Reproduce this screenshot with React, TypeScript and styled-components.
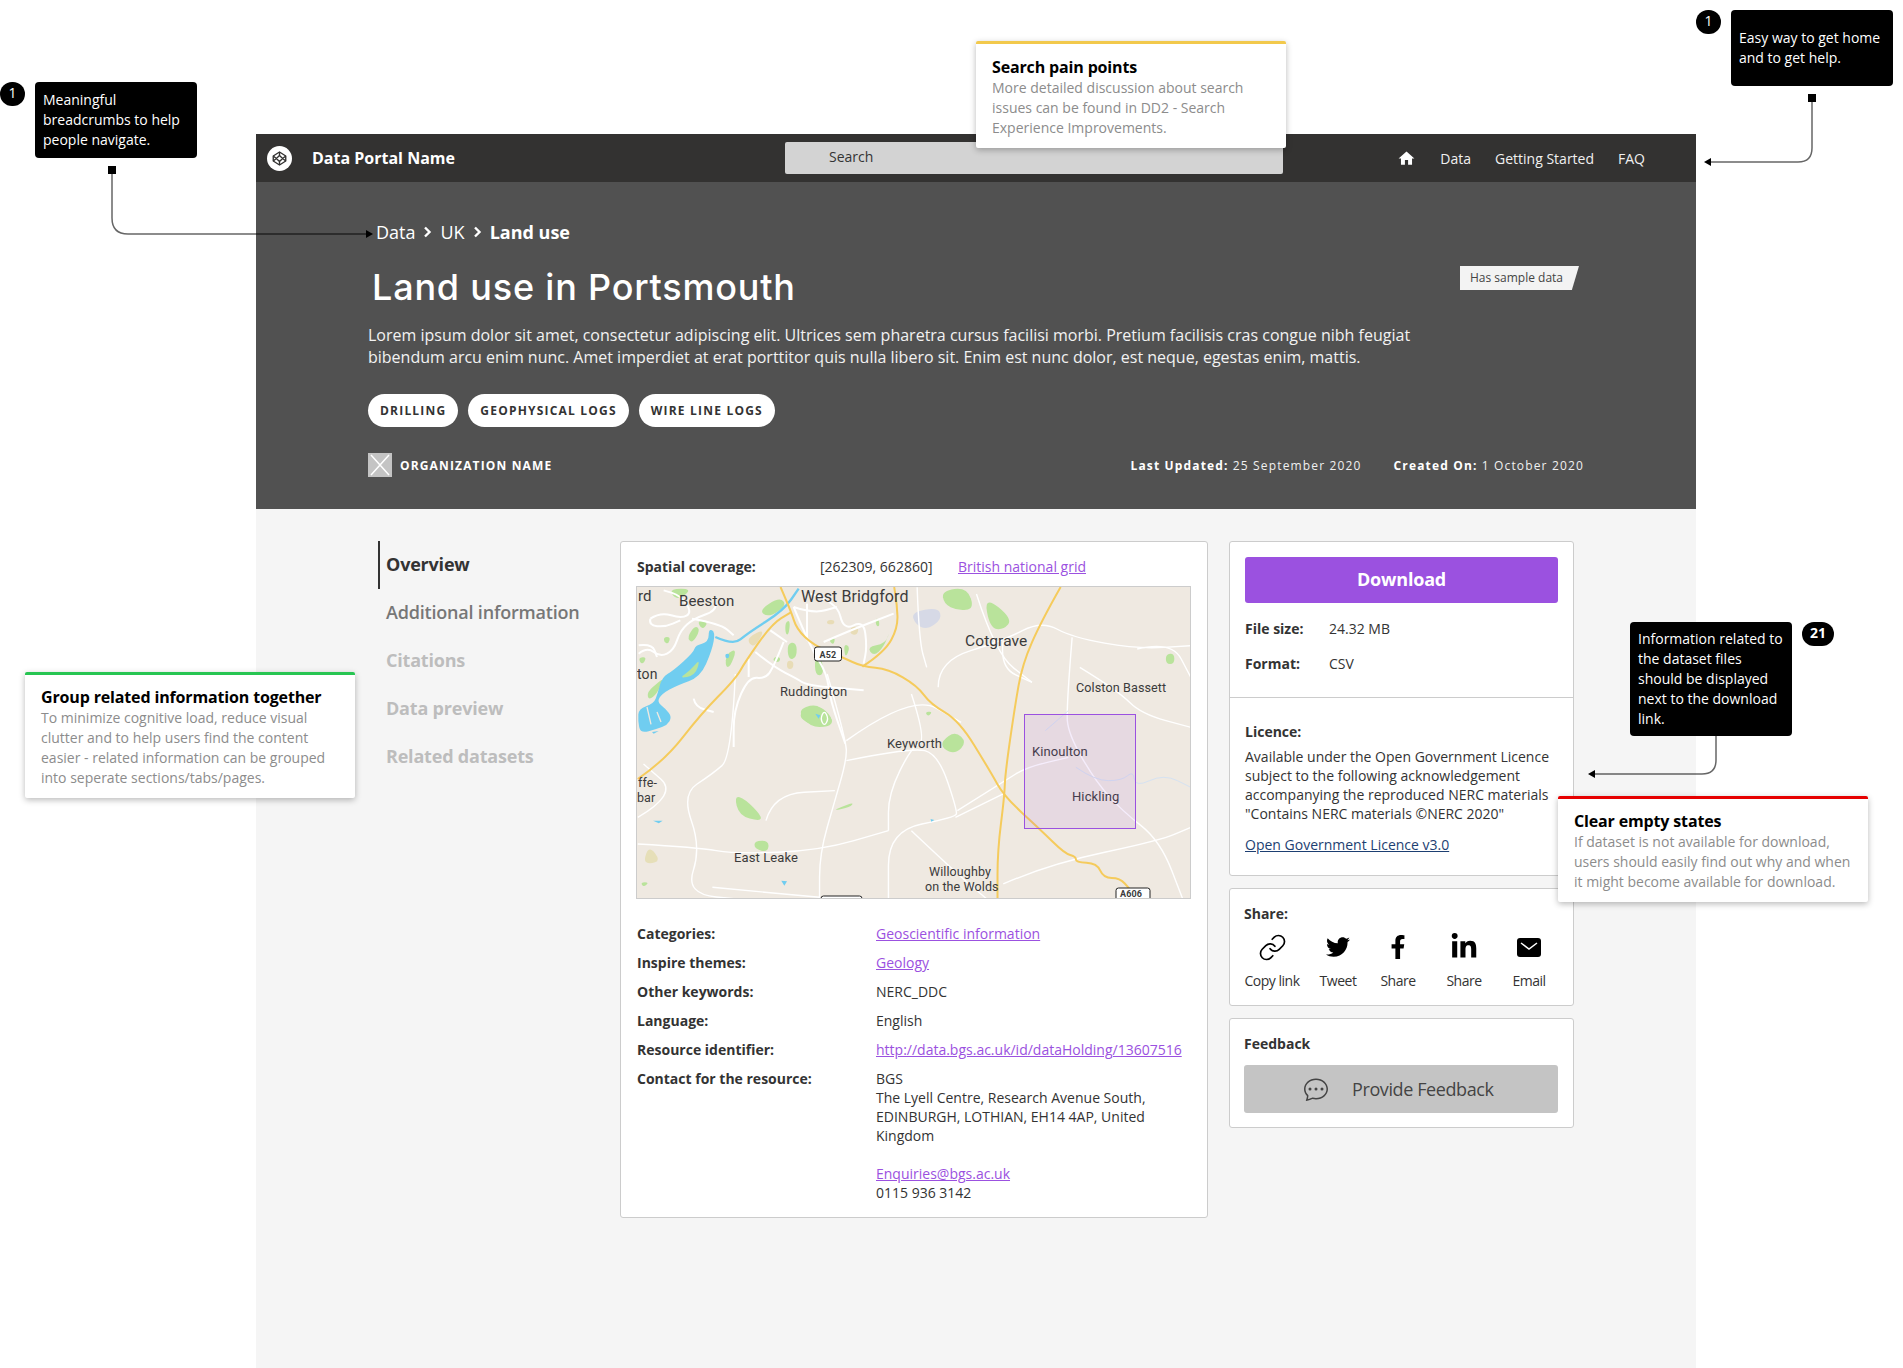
// App.tsx
import React from "react";
import styled, { createGlobalStyle } from "styled-components";
import { FaFacebookF, FaLinkedinIn, FaTwitter } from "react-icons/fa";
import { MdHome } from "react-icons/md";
import { BsChatDots } from "react-icons/bs";
import { Link as LinkIcon } from "lucide-react";

const GlobalStyle = createGlobalStyle`
  html, body {
    margin: 0;
    padding: 0;
    background: #fff;
    font-family: "Open Sans", "Liberation Sans", sans-serif;
  }
  * { box-sizing: border-box; }
`;

const Canvas = styled.div`
  position: relative;
  width: 1903px;
  height: 1368px;
  padding: 134px 0 0 256px;
  overflow: hidden;
`;

const Frame = styled.main`
  width: 1440px;
  height: 1234px;
  background: #f5f5f5;
`;

const TopBar = styled.header`
  display: flex;
  align-items: center;
  height: 48px;
  padding: 0 51px 0 11px;
  background: #333231;
  color: #fff;
`;

const Brand = styled.div`
  display: flex;
  align-items: center;
  gap: 20px;
  width: 518px;
  font-size: 16px;
  font-weight: 700;
`;

const SearchBox = styled.div`
  width: 498px;
  height: 32px;
  padding-left: 44px;
  background: #d3d3d3;
  border-radius: 2px;
  color: #333;
  font-size: 14px;
  line-height: 30px;
`;

const TopNav = styled.nav`
  display: flex;
  align-items: center;
  gap: 23px;
  margin-left: auto;
  padding-top: 1px;
  font-size: 14px;
  color: #f0f0f0;

  span {
    margin-left: 1px;
  }
`;

const Hero = styled.section`
  height: 327px;
  padding: 38px 112px 0;
  background: #515151;
  color: #fff;
`;

const Crumbs = styled.div`
  display: flex;
  align-items: center;
  gap: 8px;
  height: 24px;
  padding-left: 8px;
  font-size: 18px;
`;

const CrumbCurrent = styled.b`
  font-weight: 700;
`;

const TitleRow = styled.div`
  display: flex;
  justify-content: space-between;
  align-items: flex-start;
  margin-top: 21px;
  padding: 0 5px 0 4px;
`;

const Title = styled.h1`
  margin: 0;
  font-family: Inter, "Open Sans", sans-serif;
  font-size: 36px;
  font-weight: 500;
  line-height: 44px;
  letter-spacing: 0.8px;
`;

const SampleTag = styled.div`
  width: 119px;
  height: 24px;
  margin-top: 1px;
  padding-left: 10px;
  background: #f3f3f3;
  color: #444;
  font-size: 12px;
  line-height: 23px;
  clip-path: polygon(0 0, 100% 0, 94% 100%, 0 100%);
`;

const Lede = styled.p`
  margin: 15px 0 0;
  font-size: 16px;
  line-height: 22px;
  color: #f2f2f2;
`;

const Tags = styled.div`
  display: flex;
  gap: 10px;
  margin-top: 26px;
`;

const Tag = styled.span`
  height: 33px;
  padding: 0 12px;
  border-radius: 17px;
  background: #fff;
  color: #333;
  font-size: 12px;
  font-weight: 700;
  line-height: 33px;
  letter-spacing: 1.2px;
`;

const HeroFoot = styled.div`
  display: flex;
  justify-content: space-between;
  align-items: center;
  height: 24px;
  margin-top: 26px;
`;

const Org = styled.div`
  display: flex;
  align-items: center;
  gap: 8px;
  font-size: 12px;
  font-weight: 700;
  letter-spacing: 1.15px;
`;

const OrgMark = styled.svg`
  display: block;
  width: 24px;
  height: 24px;
  background: #c4c4c4;
`;

const Dates = styled.div`
  display: flex;
  gap: 32px;
  font-size: 12px;
  letter-spacing: 1.15px;
  color: #f0f0f0;

  b {
    font-weight: 700;
    color: #fff;
  }
`;

const Body = styled.div`
  display: flex;
  align-items: flex-start;
  padding: 32px 0 0 122px;
`;

const SideNav = styled.nav`
  flex: none;
  width: 242px;
`;

const SideItem = styled.div<{ $active?: boolean; $tone: string; $weight: number }>`
  height: 48px;
  padding-left: ${(p) => (p.$active ? "6px" : "8px")};
  border-left: ${(p) => (p.$active ? "2px solid #333" : "none")};
  color: ${(p) => p.$tone};
  font-size: 18px;
  font-weight: ${(p) => p.$weight};
  line-height: 47px;
  letter-spacing: -0.2px;
`;

const Card = styled.div`
  background: #fff;
  border: 1px solid #ccc;
  border-radius: 3px;
`;

const MainCard = styled(Card)`
  flex: none;
  width: 588px;
  height: 677px;
  padding: 15px 15px 14px;
  font-size: 14px;
  line-height: 19px;
  color: #333;
`;

const Coverage = styled.div`
  display: flex;
  height: 20px;
  margin-left: 1px;
  line-height: 20px;
`;

const CoverageLabel = styled.b`
  width: 183px;
  font-weight: 700;
`;

const CoverageValue = styled.span`
  width: 138px;
`;

const A = styled.a`
  color: #9b51e0;
  text-decoration: underline;
`;

const MapFrame = styled.div`
  position: relative;
  width: 555px;
  height: 313px;
  margin-top: 9px;
  border: 1px solid #ccc;
  overflow: hidden;
`;

const MapSvg = styled.svg`
  display: block;
  background: #efe9e1;
`;

const MapLabel = styled.text<{ $size?: number }>`
  font-family: Roboto, sans-serif;
  font-size: ${(p) => p.$size ?? 13}px;
  letter-spacing: 0.1px;
  fill: #3b3b3b;
`;

const MetaGrid = styled.dl`
  display: grid;
  grid-template-columns: 239px 1fr;
  row-gap: 10px;
  margin: 25px 0 0 1px;
`;

const MetaLabel = styled.dt`
  font-weight: 700;
`;

const MetaValue = styled.dd`
  margin: 0;
`;

const SideColumn = styled.aside`
  flex: none;
  width: 345px;
  margin-left: 21px;
  display: flex;
  flex-direction: column;
`;

const DownloadSection = styled.div`
  padding: 15px 15px 23px;
  border-bottom: 1px solid #ccc;
`;

const DownloadButton = styled.div`
  height: 46px;
  margin-bottom: 16px;
  border-radius: 3px;
  background: #9b51e0;
  color: #fff;
  font-size: 18px;
  font-weight: 700;
  line-height: 45px;
  letter-spacing: -0.2px;
  text-align: center;
`;

const FileRow = styled.div`
  display: flex;
  height: 20px;
  color: #333;
  font-size: 14px;
  line-height: 20px;

  & + & {
    margin-top: 15px;
  }

  b {
    width: 84px;
    font-weight: 700;
  }
`;

const LicenceSection = styled.div`
  padding: 24px 15px 21px;
  color: #333;
  font-size: 14px;
  line-height: 19px;
`;

const LicenceHead = styled.b`
  display: block;
  margin-bottom: 6px;
  font-weight: 700;
`;

const LicenceLink = styled.a`
  display: block;
  margin-top: 12px;
  color: #1d3f72;
  text-decoration: underline;
`;

const ShareCard = styled(Card)`
  height: 118px;
  margin-top: 12px;
  padding: 15px 14px 0;
  color: #333;
  font-size: 14px;
  line-height: 20px;
`;

const CardHead = styled.b`
  display: block;
  font-weight: 700;
`;

const ShareGrid = styled.div`
  display: grid;
  grid-template-columns: 56px 76px 44px 88px 42px;
  margin-top: 10px;
`;

const ShareItem = styled.div`
  display: flex;
  flex-direction: column;
  align-items: center;
  gap: 12px;
  font-size: 14px;
  line-height: 18px;
  letter-spacing: -0.5px;
  white-space: nowrap;
`;

const IconBox = styled.div`
  display: flex;
  align-items: center;
  justify-content: center;
  height: 26px;
  color: #000;
`;

const FeedbackCard = styled(Card)`
  height: 110px;
  margin-top: 12px;
  padding: 15px 15px 0 14px;
  color: #333;
  font-size: 14px;
  line-height: 20px;
`;

const FeedbackButton = styled.div`
  display: flex;
  align-items: center;
  gap: 24px;
  height: 48px;
  margin-top: 11px;
  padding-left: 60px;
  border-radius: 3px;
  background: #c4c4c4;
  color: #444;
  font-size: 18px;
  letter-spacing: -0.4px;
`;

const Note = styled.div<{ $left: number; $top: number; $width: number; $bar: string; $pad: number }>`
  position: absolute;
  left: ${(p) => p.$left}px;
  top: ${(p) => p.$top}px;
  width: ${(p) => p.$width}px;
  padding: ${(p) => p.$pad}px 16px 10px;
  background: #fff;
  border-top: 3px solid ${(p) => p.$bar};
  border-radius: 2px;
  box-shadow: 0 2px 6px rgba(0, 0, 0, 0.28);
  color: #8c8c8c;
  font-size: 14px;
  line-height: 20px;

  b {
    display: block;
    color: #000;
    font-size: 16px;
    font-weight: 700;
    line-height: 21px;
    letter-spacing: -0.15px;
  }
`;

const Callout = styled.div<{ $left: number; $top: number; $height: number; $pad: number }>`
  position: absolute;
  left: ${(p) => p.$left}px;
  top: ${(p) => p.$top}px;
  width: 162px;
  height: ${(p) => p.$height}px;
  padding: ${(p) => p.$pad}px 8px 0;
  background: #000;
  border-radius: 4px;
  color: #fff;
  font-size: 14px;
  line-height: 20px;
`;

const Badge = styled.div<{ $left: number; $top: number; $wide?: boolean }>`
  position: absolute;
  left: ${(p) => p.$left}px;
  top: ${(p) => p.$top}px;
  width: ${(p) => (p.$wide ? 32 : 25)}px;
  height: 24px;
  border-radius: 12px;
  background: #000;
  color: #fff;
  font-size: 14px;
  font-weight: ${(p) => (p.$wide ? 700 : 400)};
  line-height: 22px;
  text-align: center;
`;

const Connectors = styled.svg`
  position: absolute;
  left: 0;
  top: 0;
  pointer-events: none;
`;

// rounds the corners of a traced M/L path so the map doesn't look polygonal
const soften = (d: string) =>
  d
    .split("M")
    .filter(Boolean)
    .map((part) => {
      const closed = part.trim().endsWith("Z");
      const pts = part
        .replace("Z", "")
        .split("L")
        .map((s) => s.trim().split(/\s+/).map(Number));
      const mid = (a: number[], b: number[]) => `${(a[0] + b[0]) / 2} ${(a[1] + b[1]) / 2}`;
      if (closed) {
        let out = `M${mid(pts[pts.length - 1], pts[0])}`;
        pts.forEach((p, i) => {
          out += `Q${p[0]} ${p[1]} ${mid(p, pts[(i + 1) % pts.length])}`;
        });
        return out + "Z";
      }
      let out = `M${pts[0][0]} ${pts[0][1]}`;
      for (let i = 1; i < pts.length - 1; i++) {
        out += `Q${pts[i][0]} ${pts[i][1]} ${mid(pts[i], pts[i + 1])}`;
      }
      const last = pts[pts.length - 1];
      return out + `L${last[0]} ${last[1]}`;
    })
    .join("");

// map shapes are traced from a 3x crop of the map, hence the scaled groups
const yellowRoads = [
  "M418 139L445 210L460 265L505 315L580 350L632 378L700 385L775 435L810 490L885 540L965 690L1003 768L1100 870L1160 938L1190 948L1190 965L1245 968L1262 1012L1305 1012L1330 1045",
  "M45 715L115 660L210 520L300 415L325 365L395 250L445 215",
  "M632 378L690 335L725 260L722 190L715 139",
  "M1150 139L1100 240L1050 370L1030 500L1005 700L1003 768L985 930L985 1078",
];

const whiteRoads = [
  "M540 400L590 600L590 660L560 780L520 940L520 1078",
  "M590 600L760 460L890 545",
  "M590 660L760 620L830 640L880 810L875 830L700 870L700 1078",
  "M760 460L800 600L760 620L700 760L700 870",
  "M830 440L830 360L1000 300L1100 240L1180 290L1350 325L1490 315",
  "M1180 290L1165 500L1170 580L1240 720L1310 810L1410 900L1470 1078",
  "M1000 300L990 380L1075 425",
  "M1350 325L1440 300L1490 410",
  "M1200 380L1300 450L1360 520L1490 560",
  "M45 910L200 920L300 940L520 930L700 870",
  "M300 400L290 650L240 700L160 760L210 920L170 1060L330 1078",
  "M45 830L150 760L60 670",
  "M380 840L400 760L560 750",
  "M880 810L1005 720L1060 680L1170 650",
  "M875 830L1000 760",
  "M760 870L880 1000L960 1078",
  "M1000 1030L1120 970L1410 900L1490 860",
  "M240 1040L520 1070",
  "M775 140L780 300L800 380",
  "M930 160L980 340L1075 425",
];

const greens = [
  "M840 150L905 140L925 205L880 210L845 190Z",
  "M950 165L1025 235L1000 268L965 262Z",
  "M1425 340L1447 338L1447 370L1425 370Z",
  "M840 600L875 572L905 605L875 640L842 625Z",
  "M795 515L815 512L805 528Z",
  "M297 765L325 775L368 825L365 842L310 825Z",
  "M350 900L388 900L385 935L350 925Z",
  "M460 520L515 490L555 530L545 558L495 555Z",
  "M575 800L610 785L600 800L555 810Z",
  "M52 1025L75 1025L60 1040Z",
];

const topGreens = [
  "M365 70L428 30L450 55L395 92Z",
  "M150 150L175 115L190 130L165 170Z",
  "M180 100L215 105L195 130Z",
  "M80 150L100 150L95 170L82 168Z",
  "M450 170L478 165L480 210L455 220Z",
  "M690 180L745 170L760 130L740 180L710 208Z",
  "M533 210L555 215L560 265L535 265Z",
  "M410 210L430 210L428 225L410 225Z",
  "M715 95L725 95L728 118L718 118Z",
  "M268 200L300 185L280 240L265 240Z",
  "M3 212L30 210L15 235Z",
  "M30 315L65 285L80 275L60 320L35 340Z",
  "M100 5L165 5L130 35L108 30Z",
  "M480 370L535 350L565 375L590 400L575 420L520 420Z",
  "M445 105L460 100L455 145L445 140Z",
  "M575 160L595 150L590 175Z",
  "M620 170L640 180L625 215Z",
];

const tans = [
  "M335 150L385 125L355 180L335 170Z",
  "M640 120L665 118L662 143L640 143Z",
  "M570 100L592 98L592 112L570 112Z",
  "M450 220L470 222L468 246L450 246Z",
];

const topRoads = [
  "M5 200L30 180L70 210L110 190L130 130L170 95L240 70L230 30",
  "M40 95L70 75L135 95L165 75L130 25L80 10",
  "M165 95L250 110L290 145",
  "M470 60L520 180L570 260L580 340L625 470",
  "M520 20L600 45L620 130L680 100L690 180L680 230",
  "M470 60L530 80L600 60",
  "M560 165L640 130L770 80",
  "M355 195L410 240L480 275L510 295L680 310",
  "M440 165L410 240L385 275L335 270L290 370L290 480",
  "M335 270L335 215",
  "M170 335L175 360L230 375",
  "M510 50L510 160",
  "M400 130L450 165",
  "M40 95L35 115L85 120L130 100",
  "M5 175L45 170L60 210",
];

const MapDrawing: React.FC = () => (
  <MapSvg width="553" height="311" viewBox="0 0 553 311">
    <g transform="translate(-16.45 -46.33) scale(0.3827 0.3333)">
      {greens.map((d) => (
        <path key={d} d={soften(d)} fill="#b9e39b" />
      ))}
      <path d={soften("M60 960L75 915L105 960L75 970Z")} fill="#e6dfb8" />
      <path d={soften("M760 215L830 200L840 235L800 268L770 250Z")} fill="#d6d9e6" />
      {whiteRoads.map((d) => (
        <path key={d} d={soften(d)} fill="none" stroke="#fff" strokeWidth="1.4" vectorEffect="non-scaling-stroke" />
      ))}
      <path d={soften("M1110 570L1170 510M1190 680L1240 720L1310 720L1340 690L1345 740L1420 700L1490 740")} fill="none" stroke="#d5e2f2" strokeWidth="1" vectorEffect="non-scaling-stroke" />
    </g>
    <g transform="scale(0.3333)">
      {topGreens.map((d) => (
        <path key={d} d={soften(d)} fill="#b9e39b" />
      ))}
      {tans.map((d) => (
        <path key={d} d={soften(d)} fill="#e8dcb6" />
      ))}
      {topRoads.map((d) => (
        <path key={d} d={soften(d)} fill="none" stroke="#fff" strokeWidth="6" />
      ))}
      <path d={soften("M235 150L290 175L330 140L440 70L485 5")} fill="none" stroke="#70cdf0" strokeWidth="7" />
      <path d={soften("M75 270L110 250L170 195L175 175L215 165L215 125L235 135L225 190L190 270L120 295L75 320L60 345L85 365L105 390L90 415L60 425L10 440L3 400L5 365L50 350L62 320Z")} fill="#70cdf0" />
      <path d={soften("M125 275L160 250L190 215L175 265Z")} fill="#b9e39b" />
      <path d={soften("M30 360L42 412M60 375L72 405")} fill="none" stroke="#efe9e1" strokeWidth="4" />
      <path d={soften("M265 200L278 200L275 215L265 212Z")} fill="#70cdf0" />
      <path d="M535 380L550 385L545 395ZM45 435L65 432L50 440Z" fill="#70cdf0" />
      <path d={soften("M562 370L575 395L562 418L550 395Z")} fill="none" stroke="#fff" strokeWidth="4" />
    </g>
    <g transform="translate(-16.45 -46.33) scale(0.3827 0.3333)">
      {yellowRoads.map((d) => (
        <path key={d} d={soften(d)} fill="none" stroke="#f5cb5c" strokeWidth="2" vectorEffect="non-scaling-stroke" />
      ))}
      <path d="M85 840L110 840L100 848ZM420 1020L435 1022L428 1035ZM810 835L820 838L812 843ZM275 340L282 342L277 350Z" fill="#70cdf0" />
    </g>
    <rect x="177.5" y="60" width="27" height="14" rx="2.5" fill="#fff" stroke="#222" />
    <MapLabel x="182.5" y="70.5" $size={9} fontWeight="700">A52</MapLabel>
    <rect x="479" y="301" width="34" height="16" rx="2.5" fill="#fff" stroke="#222" />
    <MapLabel x="483" y="310" $size={9} fontWeight="700">A606</MapLabel>
    <rect x="184" y="309" width="41" height="12" rx="2.5" fill="#fff" stroke="#222" />
    <MapLabel x="1" y="14" $size={15}>rd</MapLabel>
    <MapLabel x="42" y="19" $size={15}>Beeston</MapLabel>
    <MapLabel x="164" y="15" $size={16}>West Bridgford</MapLabel>
    <MapLabel x="328" y="59" $size={15.5}>Cotgrave</MapLabel>
    <MapLabel x="0" y="92" $size={14}>ton</MapLabel>
    <MapLabel x="143" y="109">Ruddington</MapLabel>
    <MapLabel x="250" y="161">Keyworth</MapLabel>
    <MapLabel x="439" y="105" $size={12.6}>Colston Bassett</MapLabel>
    <MapLabel x="395" y="169">Kinoulton</MapLabel>
    <MapLabel x="435" y="214">Hickling</MapLabel>
    <MapLabel x="97" y="275">East Leake</MapLabel>
    <MapLabel x="292" y="289" $size={12.5}>Willoughby</MapLabel>
    <MapLabel x="288" y="304" $size={12.5}>on the Wolds</MapLabel>
    <MapLabel x="1" y="200" $size={12.5}>ffe-</MapLabel>
    <MapLabel x="0" y="215" $size={12.5}>bar</MapLabel>
    <rect x="387.5" y="127.5" width="111" height="114" fill="#9b51e0" fillOpacity="0.1" stroke="#9b51e0" />
  </MapSvg>
);

const PortalLogo = () => (
  <svg width="25" height="25" viewBox="0 0 24 24">
    <circle cx="12" cy="12" r="12" fill="#fff" />
    <g fill="none" stroke="#333231" strokeWidth="1.3" strokeLinejoin="round">
      <path d="M12 5.8L18 9.6V14.4L12 18.2L6 14.4V9.6Z" />
      <path d="M12 9.2L15 12L12 14.8L9 12Z" />
      <path d="M12 5.8V9.2M12 14.8V18.2M6 9.6L9 12L6 14.4M18 9.6L15 12L18 14.4" />
    </g>
  </svg>
);

const Chevron = () => (
  <svg width="9" height="12" viewBox="0 0 9 12">
    <path d="M2 1.5L6.5 6L2 10.5" fill="none" stroke="#fff" strokeWidth="2.4" />
  </svg>
);

const MailIcon = () => (
  <svg width="24" height="19" viewBox="0 0 24 19">
    <rect width="24" height="19" rx="3" fill="#000" />
    <path d="M4 5L12 11L20 5" fill="none" stroke="#fff" strokeWidth="1.5" />
  </svg>
);

const metaRows = [
  { label: "Categories:", value: <A>Geoscientific information</A> },
  { label: "Inspire themes:", value: <A>Geology</A> },
  { label: "Other keywords:", value: "NERC_DDC" },
  { label: "Language:", value: "English" },
  { label: "Resource identifier:", value: <A>http://data.bgs.ac.uk/id/dataHolding/13607516</A> },
  {
    label: "Contact for the resource:",
    value: (
      <>
        BGS
        <br />
        The Lyell Centre, Research Avenue South,
        <br />
        EDINBURGH, LOTHIAN, EH14 4AP, United
        <br />
        Kingdom
        <br />
        <br />
        <A>Enquiries@bgs.ac.uk</A>
        <br />
        0115 936 3142
      </>
    ),
  },
];

const sections = [
  { name: "Overview", tone: "#333", weight: 700, active: true },
  { name: "Additional information", tone: "#777", weight: 600 },
  { name: "Citations", tone: "#bdbdbd", weight: 700 },
  { name: "Data preview", tone: "#bdbdbd", weight: 700 },
  { name: "Related datasets", tone: "#bdbdbd", weight: 700 },
];

const shares = [
  { label: "Copy link", icon: <LinkIcon size={29} strokeWidth={1.4} /> },
  { label: "Tweet", icon: <FaTwitter size={24} /> },
  { label: "Share", icon: <FaFacebookF size={24} /> },
  { label: "Share", icon: <FaLinkedinIn size={28} /> },
  { label: "Email", icon: <MailIcon /> },
];

const App: React.FC = () => {
  return (
    <Canvas>
      <GlobalStyle />
      <Frame>
        <TopBar>
          <Brand>
            <PortalLogo />
            Data Portal Name
          </Brand>
          <SearchBox>Search</SearchBox>
          <TopNav>
            <MdHome size={19} color="#fff" />
            <span>Data</span>
            <span>Getting Started</span>
            <span>FAQ</span>
          </TopNav>
        </TopBar>

        <Hero>
          <Crumbs>
            Data <Chevron /> UK <Chevron /> <CrumbCurrent>Land use</CrumbCurrent>
          </Crumbs>
          <TitleRow>
            <Title>Land use in Portsmouth</Title>
            <SampleTag>Has sample data</SampleTag>
          </TitleRow>
          <Lede>
            Lorem ipsum dolor sit amet, consectetur adipiscing elit. Ultrices sem pharetra cursus facilisi morbi. Pretium facilisis cras congue nibh feugiat
            <br />
            bibendum arcu enim nunc. Amet imperdiet at erat porttitor quis nulla libero sit. Enim est nunc dolor, est neque, egestas enim, mattis.
          </Lede>
          <Tags>
            <Tag>DRILLING</Tag>
            <Tag>GEOPHYSICAL LOGS</Tag>
            <Tag>WIRE LINE LOGS</Tag>
          </Tags>
          <HeroFoot>
            <Org>
              <OrgMark viewBox="0 0 24 24">
                <path d="M3 2L21 22M21 2L3 22" stroke="#fff" strokeWidth="1.5" />
              </OrgMark>
              ORGANIZATION NAME
            </Org>
            <Dates>
              <span>
                <b>Last Updated:</b> 25 September 2020
              </span>
              <span>
                <b>Created On:</b> 1 October 2020
              </span>
            </Dates>
          </HeroFoot>
        </Hero>

        <Body>
          <SideNav>
            {sections.map((s) => (
              <SideItem key={s.name} $active={s.active} $tone={s.tone} $weight={s.weight}>
                {s.name}
              </SideItem>
            ))}
          </SideNav>

          <MainCard>
            <Coverage>
              <CoverageLabel>Spatial coverage:</CoverageLabel>
              <CoverageValue>[262309, 662860]</CoverageValue>
              <A>British national grid</A>
            </Coverage>
            <MapFrame>
              <MapDrawing />
            </MapFrame>
            <MetaGrid>
              {metaRows.map((row) => (
                <React.Fragment key={row.label}>
                  <MetaLabel>{row.label}</MetaLabel>
                  <MetaValue>{row.value}</MetaValue>
                </React.Fragment>
              ))}
            </MetaGrid>
          </MainCard>

          <SideColumn>
            <Card>
              <DownloadSection>
                <DownloadButton>Download</DownloadButton>
                <FileRow>
                  <b>File size:</b> 24.32 MB
                </FileRow>
                <FileRow>
                  <b>Format:</b> CSV
                </FileRow>
              </DownloadSection>
              <LicenceSection>
                <LicenceHead>Licence:</LicenceHead>
                Available under the Open Government Licence
                <br />
                subject to the following acknowledgement
                <br />
                accompanying the reproduced NERC materials
                <br />
                "Contains NERC materials ©NERC 2020"
                <LicenceLink>Open Government Licence v3.0</LicenceLink>
              </LicenceSection>
            </Card>

            <ShareCard>
              <CardHead>Share:</CardHead>
              <ShareGrid>
                {shares.map((s, i) => (
                  <ShareItem key={i}>
                    <IconBox>{s.icon}</IconBox>
                    {s.label}
                  </ShareItem>
                ))}
              </ShareGrid>
            </ShareCard>

            <FeedbackCard>
              <CardHead>Feedback</CardHead>
              <FeedbackButton>
                <BsChatDots size={24} />
                Provide Feedback
              </FeedbackButton>
            </FeedbackCard>
          </SideColumn>
        </Body>
      </Frame>

      <Connectors width="1903" height="1368" viewBox="0 0 1903 1368">
        <g fill="none" stroke="#000" strokeOpacity="0.6" strokeWidth="1.5">
          <path d="M112 174V218Q112 234 128 234H366" />
          <path d="M1812 102V148Q1812 162 1798 162H1710" />
          <path d="M1716 736V760Q1716 774 1702 774H1594" />
        </g>
        <rect x="108" y="166" width="8" height="8" />
        <rect x="1808" y="94" width="8" height="8" />
        <path d="M366 230L373 234L366 238Z" />
        <path d="M1704 162L1711 158V166Z" />
        <path d="M1588 774L1595 770V778Z" />
      </Connectors>

      <Badge $left={0} $top={82}>1</Badge>
      <Callout $left={35} $top={82} $height={76} $pad={8}>
        Meaningful
        <br />
        breadcrumbs to help
        <br />
        people navigate.
      </Callout>

      <Badge $left={1696} $top={10}>1</Badge>
      <Callout $left={1731} $top={10} $height={76} $pad={18}>
        Easy way to get home
        <br />
        and to get help.
      </Callout>

      <Callout $left={1630} $top={622} $height={114} $pad={7}>
        Information related to
        <br />
        the dataset files
        <br />
        should be displayed
        <br />
        next to the download
        <br />
        link.
      </Callout>
      <Badge $left={1802} $top={622} $wide>21</Badge>

      <Note $left={976} $top={41} $width={310} $bar="#f2c94c" $pad={13}>
        <b>Search pain points</b>
        More detailed discussion about search
        <br />
        issues can be found in DD2 - Search
        <br />
        Experience Improvements.
      </Note>

      <Note $left={25} $top={672} $width={330} $bar="#27c552" $pad={12}>
        <b>Group related information together</b>
        To minimize cognitive load, reduce visual
        <br />
        clutter and to help users find the content
        <br />
        easier - related information can be grouped
        <br />
        into seperate sections/tabs/pages.
      </Note>

      <Note $left={1558} $top={796} $width={310} $bar="#e60000" $pad={12}>
        <b>Clear empty states</b>
        If dataset is not available for download,
        <br />
        users should easily find out why and when
        <br />
        it might become available for download.
      </Note>
    </Canvas>
  );
};

export default App;
